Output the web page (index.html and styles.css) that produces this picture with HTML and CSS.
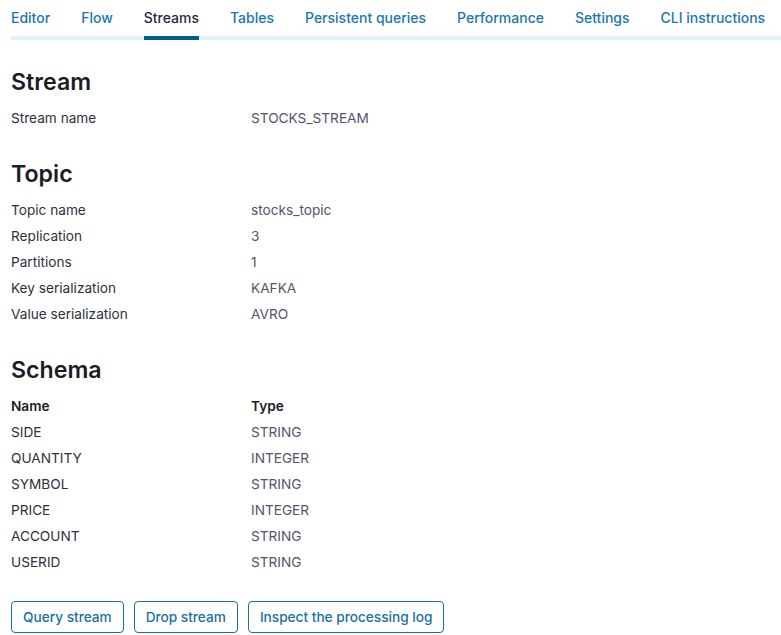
FILE: index.html
```html
<!DOCTYPE html>
<html lang="en">
<head>
<meta charset="utf-8">
<title>Streams</title>
<link rel="stylesheet" href="styles.css">
</head>
<body>
<nav class="tabs">
  <a class="tab">Editor</a>
  <a class="tab">Flow</a>
  <a class="tab active">Streams</a>
  <a class="tab">Tables</a>
  <a class="tab">Persistent queries</a>
  <a class="tab">Performance</a>
  <a class="tab">Settings</a>
  <a class="tab">CLI instructions</a>
</nav>
<main class="content">
  <section class="section">
    <h2 class="heading">Stream</h2>
    <div class="grid">
      <div class="label">Stream name</div><div class="value">STOCKS_STREAM</div>
    </div>
  </section>
  <section class="section">
    <h2 class="heading">Topic</h2>
    <div class="grid">
      <div class="label">Topic name</div><div class="value">stocks_topic</div>
      <div class="label">Replication</div><div class="value">3</div>
      <div class="label">Partitions</div><div class="value">1</div>
      <div class="label">Key serialization</div><div class="value">KAFKA</div>
      <div class="label">Value serialization</div><div class="value">AVRO</div>
    </div>
  </section>
  <section class="section">
    <h2 class="heading">Schema</h2>
    <div class="grid">
      <div class="label head">Name</div><div class="value head">Type</div>
      <div class="label">SIDE</div><div class="value">STRING</div>
      <div class="label">QUANTITY</div><div class="value">INTEGER</div>
      <div class="label">SYMBOL</div><div class="value">STRING</div>
      <div class="label">PRICE</div><div class="value">INTEGER</div>
      <div class="label">ACCOUNT</div><div class="value">STRING</div>
      <div class="label">USERID</div><div class="value">STRING</div>
    </div>
  </section>
  <div class="actions">
    <button class="btn">Query stream</button>
    <button class="btn">Drop stream</button>
    <button class="btn">Inspect the processing log</button>
  </div>
</main>
</body>
</html>
```
FILE: styles.css
```css
* { box-sizing: border-box; }
body {
  margin: 0;
  font-family: Inter, "Noto Sans", sans-serif;
  background: #fff;
  color: #30303c;
}
.tabs {
  display: flex;
  gap: 31px;
  margin-left: 11px;
  border-bottom: 4px solid #e1f2fa;
}
.tab {
  font-size: 14px;
  line-height: 20px;
  font-weight: 500;
  color: #1b77ab;
  padding: 8px 0;
  margin-bottom: -4px;
  border-bottom: 4px solid transparent;
  white-space: nowrap;
  cursor: pointer;
}
.tab.active {
  color: #1f2944;
  border-bottom-color: #005f8a;
}
.content {
  padding-left: 11px;
}
.section {
  margin-top: 27px;
}
.section:first-child {
  margin-top: 26px;
}
.heading {
  margin: 0 0 7px;
  font-size: 23.2px;
  line-height: 32px;
  font-weight: 600;
  color: #1c1c28;
}
.grid {
  display: grid;
  grid-template-columns: 240px 1fr;
}
.label, .value {
  font-size: 13.65px;
  line-height: 26px;
}
.label { color: #30303c; }
.value { color: #55546a; }
.head {
  font-weight: 600;
  color: #1c1c28;
}
.actions {
  display: flex;
  gap: 10px;
  margin-top: 26px;
}
.btn {
  font-family: Inter, "Noto Sans", sans-serif;
  font-size: 13.65px;
  font-weight: 500;
  color: #1a70a3;
  background: #fff;
  border: 1px solid #1a70a3;
  border-radius: 4px;
  height: 32px;
  padding: 0 11px;
  cursor: pointer;
}
```
